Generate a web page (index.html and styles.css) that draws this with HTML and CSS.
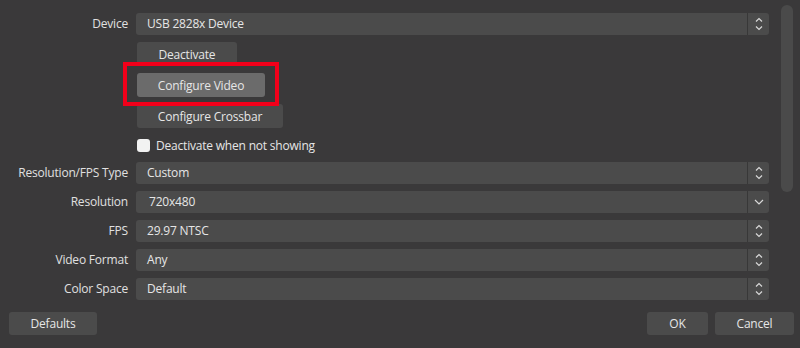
FILE: index.html
```html
<!DOCTYPE html>
<html>
<head>
  <meta charset="UTF-8">
  <title>Video Capture Device Properties</title>
  <link rel="stylesheet" href="styles.css">
</head>
<body>

<div class="dialog">
  <div class="scroll-area">
    <div class="form">
      <div class="label">Device</div>
      <div class="combo">
        <span class="value">USB 2828x Device</span>
        <span class="arrow"><svg width="8" height="14" viewBox="0 0 8 14"><polyline points="1,4.5 4,1.5 7,4.5"/><polyline points="1,9.5 4,12.5 7,9.5"/></svg></span>
      </div>

      <div></div>
      <div class="btn-cell"><button class="btn btn-deactivate">Deactivate</button></div>

      <div></div>
      <div class="btn-cell"><button class="btn btn-video btn-hover marked">Configure Video</button></div>

      <div></div>
      <div class="btn-cell"><button class="btn btn-crossbar">Configure Crossbar</button></div>

      <div></div>
      <label class="check"><span class="box"></span>Deactivate when not showing</label>

      <div class="label">Resolution/FPS Type</div>
      <div class="combo">
        <span class="value">Custom</span>
        <span class="arrow"><svg width="8" height="14" viewBox="0 0 8 14"><polyline points="1,4.5 4,1.5 7,4.5"/><polyline points="1,9.5 4,12.5 7,9.5"/></svg></span>
      </div>

      <div class="label">Resolution</div>
      <div class="combo">
        <span class="value edit">720x480</span>
        <span class="arrow"><svg width="10" height="14" viewBox="0 0 10 14"><polyline points="1,5 5,9 9,5"/></svg></span>
      </div>

      <div class="label">FPS</div>
      <div class="combo">
        <span class="value">29.97 NTSC</span>
        <span class="arrow"><svg width="8" height="14" viewBox="0 0 8 14"><polyline points="1,4.5 4,1.5 7,4.5"/><polyline points="1,9.5 4,12.5 7,9.5"/></svg></span>
      </div>

      <div class="label">Video Format</div>
      <div class="combo">
        <span class="value">Any</span>
        <span class="arrow"><svg width="8" height="14" viewBox="0 0 8 14"><polyline points="1,4.5 4,1.5 7,4.5"/><polyline points="1,9.5 4,12.5 7,9.5"/></svg></span>
      </div>

      <div class="label">Color Space</div>
      <div class="combo">
        <span class="value">Default</span>
        <span class="arrow"><svg width="8" height="14" viewBox="0 0 8 14"><polyline points="1,4.5 4,1.5 7,4.5"/><polyline points="1,9.5 4,12.5 7,9.5"/></svg></span>
      </div>
    </div>

    <div class="scrollbar"><div class="handle"></div></div>
  </div>

  <div class="footer">
    <button class="btn btn-foot btn-defaults">Defaults</button>
    <div class="spacer"></div>
    <button class="btn btn-foot btn-ok">OK</button>
    <button class="btn btn-foot btn-cancel">Cancel</button>
  </div>
</div>

</body>
</html>
```

FILE: styles.css
```css
body {
  margin: 0;
  background: #3a393a;
  font-family: "Open Sans", "Noto Sans", sans-serif;
  font-size: 12px;
  letter-spacing: -0.2px;
  color: #e6e6e6;
}
.dialog {
  width: 800px;
  height: 348px;
  display: flex;
  flex-direction: column;
}
.scroll-area {
  display: flex;
  height: 306px;
}
.form {
  display: grid;
  grid-template-columns: 128px 633px;
  grid-template-rows: 22px 24px 24px 24px 20px 22px 22px 22px 22px 22px;
  column-gap: 8px;
  row-gap: 7px;
  padding-top: 13px;
}
.label {
  text-align: right;
  line-height: 22px;
  color: #e0e0e0;
  white-space: nowrap;
}
.combo {
  display: flex;
  background: #4b4b4b;
  border-radius: 3px;
  height: 22px;
}
.value {
  flex: 1;
  line-height: 22px;
  padding-left: 11px;
}
.value.edit {
  padding-left: 13px;
}
.arrow {
  width: 21px;
  border-left: 1px solid #383838;
  display: flex;
  align-items: center;
  justify-content: center;
}
.arrow svg {
  fill: none;
  stroke: #d8d8d8;
  stroke-width: 1.2;
}
.btn-cell {
  display: flex;
  position: relative;
}
.btn {
  font-family: inherit;
  font-size: 12px;
  letter-spacing: -0.2px;
  color: #e6e6e6;
  background: #4b4b4b;
  border: none;
  border-radius: 3px;
  height: 24px;
  padding: 0;
  margin: 0 0 0 1px;
}
.btn-deactivate {
  width: 100px;
}
.btn-video {
  width: 128px;
}
.btn-crossbar {
  width: 146px;
}
.btn-hover {
  background: #6b6b6b;
}
.marked {
  position: relative;
  z-index: 1;
}
.marked::after {
  content: "";
  position: absolute;
  left: -14px;
  right: -14px;
  top: -11px;
  bottom: -9px;
  border: 4px solid #f2001a;
}
.check {
  display: flex;
  align-items: center;
  gap: 6px;
  padding-left: 1px;
}
.box {
  width: 13px;
  height: 13px;
  background: #f2f2f2;
  border-radius: 3px;
}
.scrollbar {
  margin-left: 12px;
  padding-top: 5px;
}
.handle {
  width: 12px;
  height: 187px;
  background: #4a4a4a;
  border-radius: 6px;
}
.footer {
  display: flex;
  padding: 6px 6px 0 9px;
  gap: 7px;
}
.spacer {
  flex: 1;
}
.btn-foot {
  height: 23px;
  margin: 0;
}
.btn-defaults {
  width: 88px;
}
.btn-ok {
  width: 61px;
}
.btn-cancel {
  width: 79px;
}
```
